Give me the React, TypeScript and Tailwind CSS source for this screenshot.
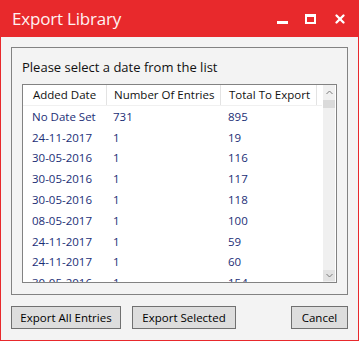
import { X } from 'lucide-react';

const rows = [
  ['No Date Set', '731', '895'],
  ['24-11-2017', '1', '19'],
  ['30-05-2016', '1', '116'],
  ['30-05-2016', '1', '117'],
  ['30-05-2016', '1', '118'],
  ['08-05-2017', '1', '100'],
  ['24-11-2017', '1', '59'],
  ['24-11-2017', '1', '60'],
  ['30-05-2016', '1', '154'],
];

function Button({ label, width }: { label: string; width: string }) {
  return (
    <button className={`${width} h-[23px] border border-[#707070] bg-[#dddddd] text-[11.5px] text-black leading-none`}>
      {label}
    </button>
  );
}

export default function App() {
  return (
    <div className="w-[359px] h-[341px] flex flex-col bg-[#e8292c] text-black" style={{ fontFamily: '"Open Sans", "Noto Sans", sans-serif' }}>
      {/* Title bar */}
      <div className="h-[37px] flex items-center pl-[12px] text-white shrink-0">
        <span className="text-[17px] leading-none tracking-[-0.2px] text-[#fff2f2]">Export Library</span>
        <div className="ml-auto flex items-center h-full">
          <div className="w-[11px] h-[3px] bg-white mt-[8px] mr-[17px]" />
          <div className="w-[11px] h-[10px] border-2 border-t-[3px] border-white mr-[17px]" />
          <X className="w-[14px] h-[14px] text-white mr-[12px]" strokeWidth={4} />
        </div>
      </div>

      {/* Body */}
      <div className="flex-1 mx-px mb-px bg-[#f3f3f3] px-[10px] pt-[10px] flex flex-col">
        <div className="h-[248px] border border-[#828282] px-[10px] flex flex-col">
          <div className="pt-[11px] h-[36px] text-[13px] leading-[16px] text-[#111]">Please select a date from the list</div>
          <div className="h-[199px] border border-[#828282] bg-white flex overflow-hidden">
            <div className="w-[299px] flex flex-col text-[11.5px] overflow-hidden">
              <div className="h-[21px] shrink-0 flex border-b border-[#f0f0f0] text-[#111]">
                <div className="w-[84px] pl-[10px] flex items-center border-r border-[#e3e3e3]">Added Date</div>
                <div className="w-[114px] pl-[7px] flex items-center border-r border-[#e3e3e3]">Number Of Entries</div>
                <div className="w-[96px] pl-[8px] flex items-center border-r border-[#e3e3e3]">Total To Export</div>
              </div>
              {rows.map((r, i) => (
                <div key={i} className="h-[20.8px] shrink-0 flex items-center text-[#1b2e76]">
                  <div className="w-[84px] pl-[9px]">{r[0]}</div>
                  <div className="w-[114px] pl-[6px]">{r[1]}</div>
                  <div className="w-[96px] pl-[7px]">{r[2]}</div>
                </div>
              ))}
            </div>
            <div className="w-[12px] ml-auto mr-px bg-[#f0f0f0] flex flex-col items-center">
              <div className="h-[15px] flex items-center justify-center">
                <svg width="7" height="5" viewBox="0 0 7 5"><path d="M0.5 4 L3.5 1 L6.5 4" fill="none" stroke="#7a7a7a" strokeWidth="1" /></svg>
              </div>
              <div className="w-full h-[8px] bg-[#dadada]" />
              <div className="flex-1" />
              <div className="w-full h-[11px] mb-[1px] bg-[#e2e2e2] flex items-center justify-center">
                <svg width="7" height="5" viewBox="0 0 7 5"><path d="M0.5 1 L3.5 4 L6.5 1" fill="none" stroke="#7a7a7a" strokeWidth="1" /></svg>
              </div>
            </div>
          </div>
        </div>
        <div className="mt-[11px] flex items-start">
          <Button label="Export All Entries" width="w-[110px]" />
          <div className="w-[11px]" />
          <Button label="Export Selected" width="w-[104px]" />
          <div className="flex-1" />
          <Button label="Cancel" width="w-[57px]" />
        </div>
      </div>
    </div>
  );
}
